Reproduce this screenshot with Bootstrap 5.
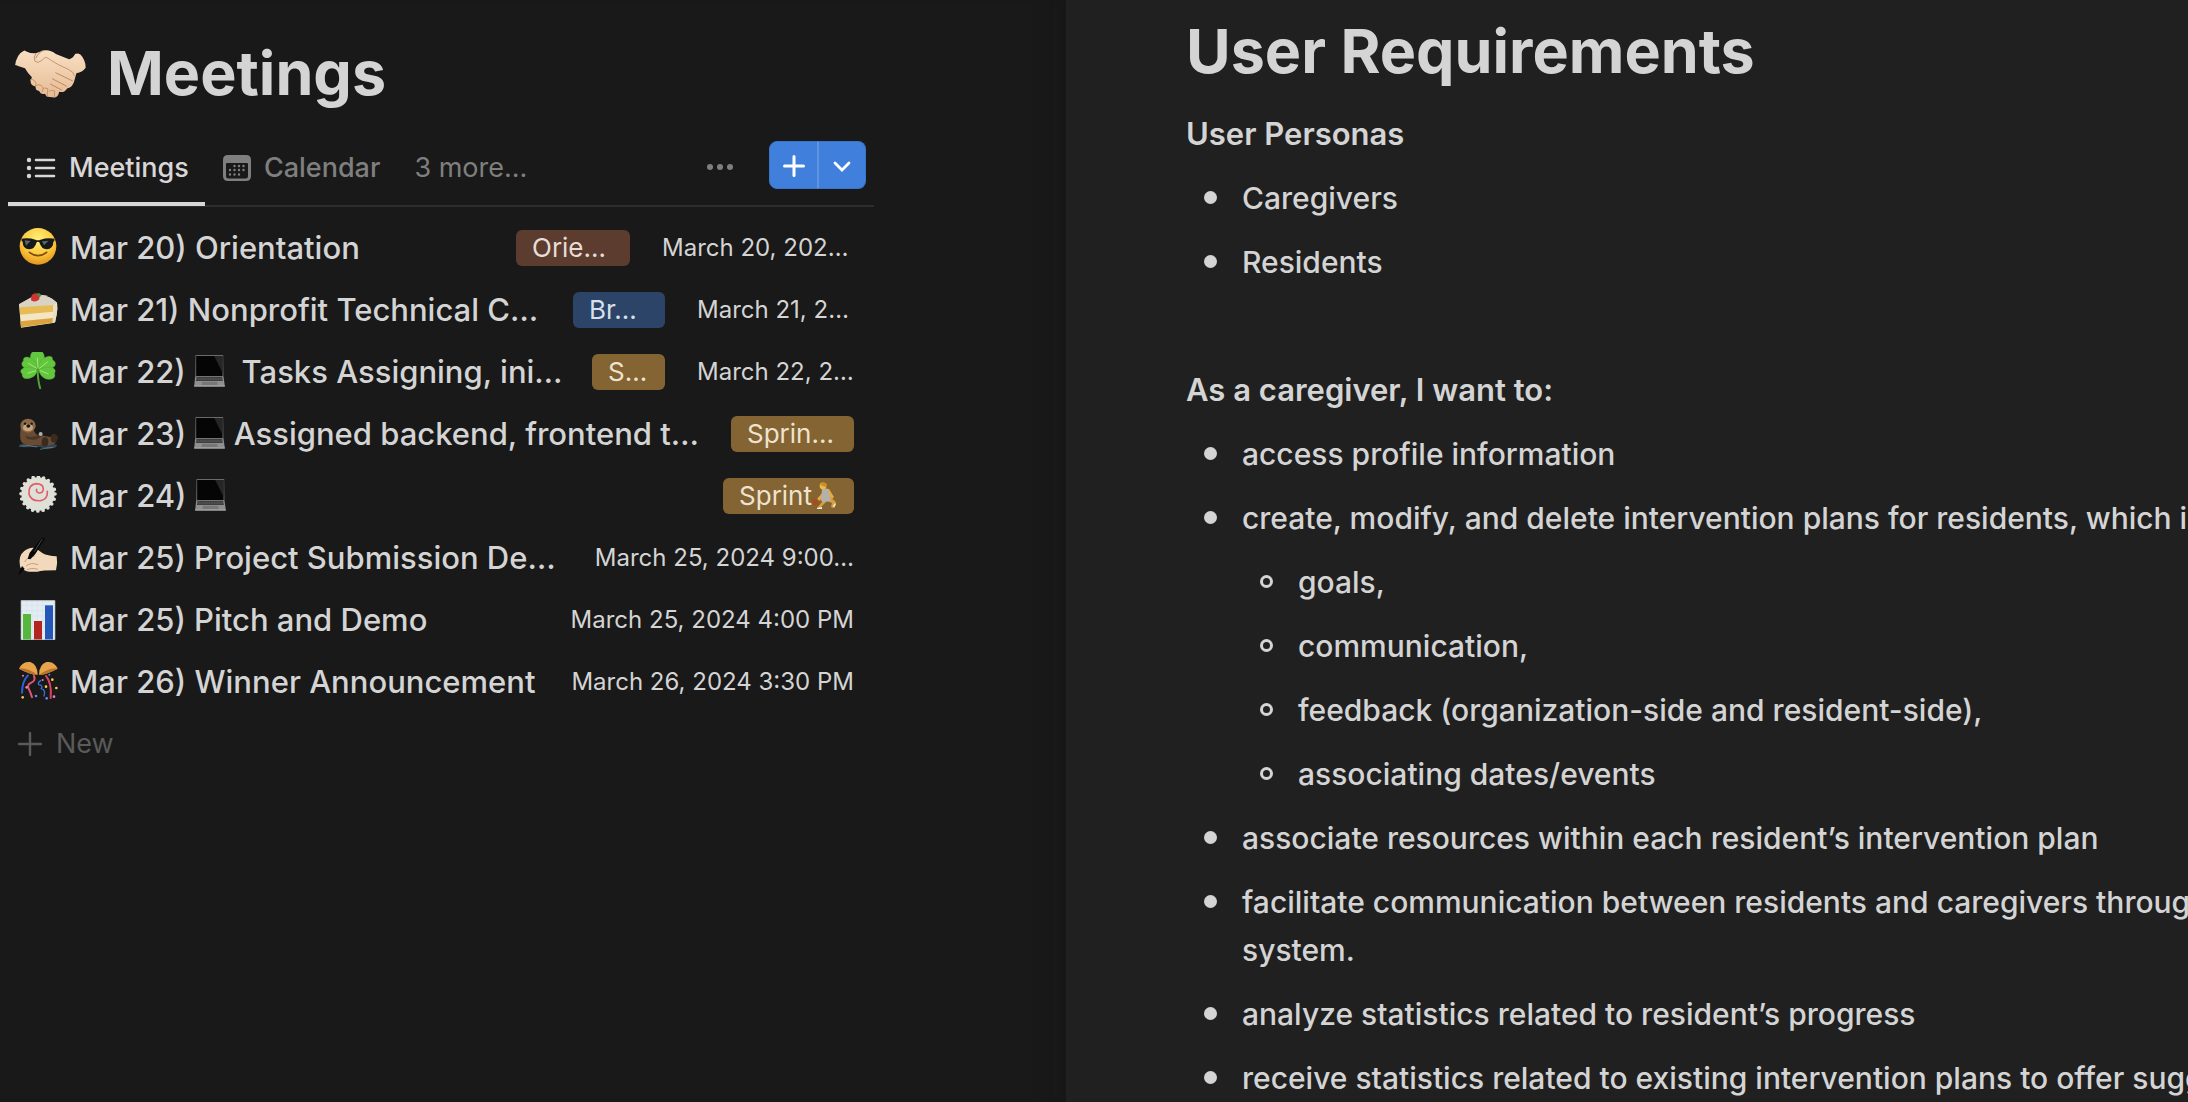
<!DOCTYPE html>
<html lang="en" data-bs-theme="dark">
<head>
<meta charset="utf-8">
<meta name="viewport" content="width=device-width, initial-scale=1">
<title>Meetings</title>
<link href="https://cdn.jsdelivr.net/npm/bootstrap@5.3.0/dist/css/bootstrap.min.css" rel="stylesheet">
<style>
  body { font-family: Inter, "Liberation Sans", sans-serif; color: #d4d4d4; background: #191919; }
  h1, h2 { color: #d4d4d4; }
  .pane-left { flex: 0 0 1066px; padding-left: 8px; background: #191919; box-shadow: inset -30px 0 20px -20px #171717; }
  .pane-right { flex: 1 1 0; min-width: 0; padding-left: 120px; background: #202020; }
  .board { width: 866px; }
  .page-title { font-size: 61px; line-height: 78px; font-weight: 700; margin: 0; color: #d4d4d4; }
  .pane-left .page-title { padding: 34px 0 0 6px; gap: 20px; margin-bottom: 13px; }
  .pane-right .page-title { padding-top: 12px; margin-bottom: 12px; }
  .view-bar { height: 82px; border-bottom: 2px solid #2d2d2d; padding-right: 8px; }
  .view-tab { height: 82px; padding: 10px 16px 0 18px; gap: 13px; font-size: 27px; color: #7f7f7f; border-bottom: 4px solid transparent; text-decoration: none; font-weight: 500; }
  .view-tab.active { color: #d9d6d8; border-bottom-color: #d9d6d8; }
  .view-tab.plain { font-weight: 400; }
  .more-btn { padding: 0; margin-right: 35px; line-height: 1; color: #7f7f7f; }
  .new-btn { height: 48px; background: #407fdb; border: 1px solid #3a75cb; color: #fff; padding: 0; --bs-btn-border-radius: 8px; width: 49px; }
  .new-btn:hover { background: #3a75cb; color: #fff; }
  .new-btn + .new-btn { border-left: 2px solid #6094df; }
  .rows { padding: 10px 20px 0 10px; }
  .meeting { height: 62px; gap: 32px; }
  .meeting-name { font-size: 31px; font-weight: 500; gap: 12px; color: #d4d4d4; text-decoration: none; white-space: pre; min-width: 0; }
  .meeting-name > svg { flex: none; }
  .meeting-name > span { min-width: 0; }
  .laptop { width: 31px; height: 32px; vertical-align: -4px; }
  .tag { height: 36px; line-height: 36px; border-radius: 6px; padding: 0 16px; font-size: 26px; white-space: nowrap; flex: none; color: #e6ddd6; }
  .tag-brown { background: #5b3c2f; width: 114px; }
  .tag-blue { background: #2c4468; width: 92px; color: #d9e0ea; }
  .tag-gold { background: #836432; color: #eee3cf; }
  .tag-s { width: 73px; }
  .tag-l { width: 123px; }
  .when { font-size: 24px; white-space: nowrap; flex: none; }
  .when-m { width: 192px; }
  .when-s { width: 157px; }
  .add-row { height: 62px; gap: 14px; font-size: 27px; color: #5a5a5a; padding: 0; border: 0; background: none; }
  .doc-line { font-size: 30px; line-height: 48px; padding: 8px 0; margin: 0; white-space: nowrap; font-weight: 500; }
  .doc-head { font-size: 31px; font-weight: 600; }
  .doc-blank { height: 64px; }
  .dot, .ring { flex: none; width: 13px; height: 13px; border-radius: 50%; margin: 17px 25px 0 18px; }
  .dot { background: #d4d4d4; }
  .ring { border: 3px solid #d4d4d4; }
  .nest { padding-left: 56px; }
</style>
<script src="https://cdn.jsdelivr.net/npm/bootstrap@5.3.0/dist/js/bootstrap.bundle.min.js"></script>
</head>
<body>
<svg width="0" height="0" class="d-none" aria-hidden="true">
  <symbol id="laptop" viewBox="0 0 92 96">
    <path d="M4 0h83l1 66H3z" fill="#6a6a6a"/><path d="M6 3h79v60H6z" fill="#050505"/><path d="M60 3h25v50z" fill="#262626"/>
    <path d="M3 65h85l4 27H0z" fill="#8f8f8f"/><path d="M7 66h77l2 12H5z" fill="#3d3d3d"/><path d="M7 70h78M6 74h79" stroke="#777" stroke-width="1.5" stroke-dasharray="3 2"/>
    <path d="M24 80h45l2 10H22z" fill="#777"/><path d="M0 91h92v4H0z" fill="#b4b4b4"/>
  </symbol>
</svg>
<div class="d-flex vh-100 overflow-hidden">
  <section class="pane-left overflow-hidden">
    <div class="board">
      <h1 class="page-title d-flex align-items-center">
        <svg width="73" height="51" viewBox="40 92 220 152" aria-hidden="true">
          <defs><linearGradient id="skin" x1="0" y1="0" x2="0" y2="1"><stop offset="0" stop-color="#f8dfc3"/><stop offset="1" stop-color="#e6bb93"/></linearGradient></defs>
          <path d="M43 146q4-36 28-47l10 4q8 5 25 4l22-8q20-4 38 10l40 16q12-3 18-16 8-4 16 2 16 16 16 40-10 14-28 16l-6 22q-4 20-22 24-8 14-24 10-2 16-14 17l-14-1q-12 0-14-10-14 3-18-8-12-2-11-14-16-3-15-18l4-10q-14-14-21-27-18-4-30-10z" fill="url(#skin)"/>
          <path d="M106 107q-8 12-3 24 10 8 20-2l12-10q8 2 18 10 20 14 50 26 18 8 19 20" fill="none" stroke="#c5946c" stroke-width="3"/>
          <path d="M166 166l50 24M156 184l42 22M150 200l34 18M128 99q-14 4-22 22" fill="none" stroke="#bd8860" stroke-width="3" stroke-linecap="round"/>
          <path d="M88 188q6-6 14 2t2 16M106 206q6-8 16-2t2 20M126 216q6-8 16-2l-2 24M146 222q8-6 16-2v20" fill="none" stroke="#c5946c" stroke-width="3"/>
        </svg>
        <span>Meetings</span>
      </h1>
      <nav class="view-bar d-flex align-items-center" aria-label="Views">
        <div class="d-flex align-items-start">
          <a href="#" class="view-tab active d-flex align-items-center">
            <svg width="30" height="22" viewBox="0 0 30 22" fill="none" stroke="currentColor" stroke-linecap="round"><path d="M10 3h18M10 11h18M10 19h18" stroke-width="2.6"/><path d="M3 3h0M3 11h0M3 19h0" stroke-width="4.4"/></svg>
            <span>Meetings</span></a>
          <a href="#" class="view-tab d-flex align-items-center">
            <svg width="28" height="26" viewBox="0 0 28 26"><path d="M5 0h18q5 0 5 5v16q0 5-5 5H5q-5 0-5-5V5q0-5 5-5zM3 9v12q0 2.500 2.500 2.500h17q2.500 0 2.500-2.500V9q0-1-1-1H4q-1 0-1 1z" fill="currentColor" fill-rule="evenodd"/><path d="M11.500 11h0M16 11h0M20.500 11h0M7 15h0M11.500 15h0M16 15h0M20.500 15h0M7 19.500h0M11.500 19.500h0M16 19.500h0" stroke="currentColor" stroke-width="2.400" stroke-linecap="round"/></svg>
            <span>Calendar</span></a>
          <a href="#" class="view-tab plain d-flex align-items-center">3 more...</a>
        </div>
        <button type="button" class="btn more-btn ms-auto" aria-label="More options"><svg width="26" height="8" viewBox="0 0 26 8" fill="currentColor"><circle cx="3" cy="4" r="3"/><circle cx="13" cy="4" r="3"/><circle cx="23" cy="4" r="3"/></svg></button>
        <div class="btn-group">
          <button type="button" class="btn new-btn" aria-label="New"><svg width="24" height="24" viewBox="0 0 24 24"><path d="M12 2.500v19M2.500 12h19" stroke="#fff" stroke-width="3" stroke-linecap="round"/></svg></button>
          <button type="button" class="btn new-btn" aria-label="New from template"><svg width="18" height="12" viewBox="0 0 18 12"><path d="M2 2l7 7 7-7" fill="none" stroke="#fff" stroke-width="2.800" stroke-linecap="round"/></svg></button>
        </div>
      </nav>

      <div class="rows">
        <div class="meeting d-flex align-items-center">
          <a href="#" class="meeting-name d-flex align-items-center me-auto"><svg width="40" height="40" viewBox="54 39 120 120">
            <defs><radialGradient id="sun" cx=".5" cy=".3" r=".75"><stop offset="0" stop-color="#fff07a"/><stop offset=".6" stop-color="#fbc638"/><stop offset="1" stop-color="#e08a1b"/></radialGradient></defs>
            <circle cx="114" cy="94" r="55" fill="url(#sun)"/><path d="M64 71q24-3 42 3 8 3 16 0 18-6 42-3l-1 7-3 2q0 22-20 23-16 0-22-21-4-4-8 0-6 21-22 21-20-1-20-23l-3-2z" fill="#16191c"/><path d="M74 76l18 2-14 14zM126 79l20-2-14 14z" fill="#5b6368"/><path d="M88 112q26 20 52 0" fill="none" stroke="#7c4a12" stroke-width="5" stroke-linecap="round"/></svg><span>Mar 20) Orientation</span></a>
          <span class="tag tag-brown">Orie…</span><time class="when when-m">March 20, 202…</time>
        </div>
        <div class="meeting d-flex align-items-center">
          <a href="#" class="meeting-name d-flex align-items-center me-auto"><svg width="40" height="40" viewBox="54 225 120 120">
            <path d="M57 268l54-30q40 4 60 25 4 28-7 60L63 338z" fill="#f3e6c4"/><path d="M57 268l54-30q40 4 60 25l-10 8-98 7z" fill="#d9d3c6"/><path d="M59 277l101-7v20L60 299z" fill="#e7bc56"/><path d="M61 319l99-10-2 14-95 14z" fill="#dba33f"/><path d="M160 271q12-6 12 12l-6 38-8 2z" fill="#e9ddc6"/><path d="M93 256q-2-20 14-21 14 4 11 18-12 12-25 3z" fill="#cf3530"/><path d="M108 236l10-2 6 8-6 5z" fill="#4f8a38"/></svg><span>Mar 21) Nonprofit Technical C…</span></a>
          <span class="tag tag-blue">Br…</span><time class="when when-s">March 21, 2…</time>
        </div>
        <div class="meeting d-flex align-items-center">
          <a href="#" class="meeting-name d-flex align-items-center me-auto"><svg width="40" height="40" viewBox="54 411 120 120">
            <g fill="#62c63e" stroke="#4aa52f" stroke-width="1"><path d="M115 464C90 446 86 424 96 412q8-10 18-2 10-6 17 6c6 14 0 34-16 48z"/><path d="M115 464c0-22 12-36 30-40q14-2 13 11 12 6 7 17c-10 14-30 16-50 12z"/><path d="M113 464c-2-20-12-34-30-38q-15-1-13 12-8 6-3 15c10 12 28 14 46 11z"/><path d="M113 464c-18-8-36-10-46-3q-10 8-1 15 0 16 16 15c18-2 28-12 31-27z"/><path d="M115 464c16-8 34-10 46-4q8 6 3 15 4 15-11 18c-18 2-32-8-38-29z"/></g><path d="M113 462q0 34 8 60" fill="none" stroke="#4fa332" stroke-width="6"/><path d="M114 458l-2-30M118 460l26-20M110 460l-26-16M108 467l-26 8M120 467l26 10" stroke="#a7e67b" stroke-width="3"/></svg><span>Mar 22) <svg class="laptop" role="img" aria-label="laptop"><use href="#laptop"/></svg>  Tasks Assigning, ini…</span></a>
          <span class="tag tag-gold tag-s">S…</span><time class="when when-s">March 22, 2…</time>
        </div>
        <div class="meeting d-flex align-items-center">
          <a href="#" class="meeting-name d-flex align-items-center me-auto"><svg width="40" height="40" viewBox="54 597 120 120">
            <path d="M56 690q14-6 30 0t40-2 46 2l-6 8-26 5-20-7-50 1z" fill="#33454f"/><path d="M62 640q-6 40 8 46 24 10 62 2l10 4 22-6q10-10 8-22-14-8-22 2l-42-8-8-14-16-18z" fill="#6a4b34"/><ellipse cx="84" cy="632" rx="23" ry="21" fill="#8b6848"/><ellipse cx="84" cy="638" rx="15" ry="11" fill="#c6a681"/><ellipse cx="85" cy="633" rx="6" ry="5" fill="#1b1410"/><circle cx="75" cy="626" r="3.500" fill="#1b1410"/><circle cx="95" cy="626" r="3.500" fill="#1b1410"/><path d="M76 662q24 10 44-6l8 6q-20 18-46 10z" fill="#4d3625"/><circle cx="122" cy="657" r="6" fill="#b0b0ae"/><ellipse cx="135" cy="681" rx="10" ry="14" fill="#3b2a1e"/><ellipse cx="162" cy="670" rx="10" ry="13" fill="#3b2a1e"/><path d="M58 694q30-6 54 2M120 703q20-5 40-6" fill="none" stroke="#6f93a6" stroke-width="2"/></svg><span>Mar 23) <svg class="laptop" role="img" aria-label="laptop"><use href="#laptop"/></svg> Assigned backend, frontend t…</span></a>
          <span class="tag tag-gold tag-l">Sprin…</span>
        </div>
        <div class="meeting d-flex align-items-center">
          <a href="#" class="meeting-name d-flex align-items-center me-auto"><svg width="40" height="40" viewBox="54 48 120 120">
            <circle cx="114" cy="102" r="50" fill="#dfe1d8"/><circle cx="114" cy="102" r="51" fill="none" stroke="#dfe1d8" stroke-width="11" stroke-linecap="round" stroke-dasharray="0 16"/><path d="M142 94q2 24-20 28-30 2-35-20-3-28 22-31 20 0 21 16-1 13-13 12-10-3-7-11" fill="none" stroke="#e05f68" stroke-width="5" stroke-linecap="round"/></svg><span>Mar 24) <svg class="laptop" role="img" aria-label="laptop"><use href="#laptop"/></svg></span></a>
          <span class="tag tag-gold d-flex align-items-center">Sprint<svg width="26" height="28" viewBox="0 0 26 28" role="img" aria-label="basketball player"><path d="M10 6l7 1 5 8-2 2-5-5-8 7-2-2 6-7z" fill="#e5ac3e"/><path d="M9 15l8-1 7 6-3 6-2-1 1-4-5-2-4 4-4 4-2-1 5-6z" fill="#d9a03a"/><path d="M10 7l6 0 2 8 1 4-9 1-1-2z" fill="#b3b0ad"/><circle cx="11" cy="4" r="3.400" fill="#f0b93f"/><path d="M8 3q2-4 7-1l-1 3z" fill="#c98d2c"/><circle cx="3.500" cy="20" r="3.200" fill="#a84d1f"/><path d="M5 26l5-1v2H5zM21 24l2-3 1 1-2 4z" fill="#eee"/></svg></span>
        </div>
        <div class="meeting d-flex align-items-center">
          <a href="#" class="meeting-name d-flex align-items-center me-auto"><svg width="40" height="40" viewBox="54 234 120 120">
            <path d="M60 318q-6-30 12-44 16-14 34-10l22 16q14 8 42 9 4 22-2 42-40 0-56 4-30 2-38-4-12-2-14-13z" fill="#f3d9bc"/><path d="M78 318q14-12 36-4M80 330q14-8 34-2M74 306q8-16 30-18" fill="none" stroke="#c99d78" stroke-width="3"/><path d="M128 231l7 5-29 46-15 16-8-2 6-18zM66 318l8 8-14 16-6 4z" fill="#070707"/><path d="M127 237l-24 38" stroke="#6a6a6a" stroke-width="2"/></svg><span>Mar 25) Project Submission De…</span></a>
          <time class="when">March 25, 2024 9:00…</time>
        </div>
        <div class="meeting d-flex align-items-center">
          <a href="#" class="meeting-name d-flex align-items-center me-auto"><svg width="40" height="40" viewBox="54 414 120 120">
            <path d="M63 415h102v119H63z" fill="#e3ebf3"/><path d="M64 430h100M64 446h100M64 462h100M64 478h100M64 494h100M64 510h100M80 416v117M96 416v117M112 416v117M128 416v117" stroke="#cdd8e4" stroke-width="1"/><path d="M69 456h24v77H69z" fill="#55b83c"/><path d="M102 477h24v56h-24z" fill="#b3261f"/><path d="M135 430h24v103h-24z" fill="#2458b8"/><path d="M63 416h102v117H63z" fill="none" stroke="#a9b2bb" stroke-width="2"/></svg><span>Mar 25) Pitch and Demo</span></a>
          <time class="when">March 25, 2024 4:00 PM</time>
        </div>
        <div class="meeting d-flex align-items-center">
          <a href="#" class="meeting-name d-flex align-items-center me-auto"><svg width="40" height="40" viewBox="54 602 120 120">
            <path d="M57 622q10-22 34-20 22 8 22 38-18 2-56-18z" fill="#e8a44a"/><path d="M173 622q-10-22-34-20-22 8-22 38 18 2 56-18z" fill="#e8a44a"/><path d="M57 622q18-6 56 18-18 2-56-18zM173 622q-18-6-56 18 18 2 56-18z" fill="#b9762a"/><g fill="none" stroke-width="6" stroke-linecap="round"><path d="M84 642q-18 18-18 52" stroke="#2f62d9"/><path d="M102 644q6 14-8 20t-8 18 10 26" stroke="#e25675"/><path d="M138 644q18 20 14 66" stroke="#d9415f"/><path d="M122 658q-10 6-6 12 14 2 8 12 14 4 8 22" stroke="#3d6fd8" stroke-width="4"/></g><g fill="#f5c94b"><circle cx="68" cy="708" r="4"/><circle cx="138" cy="676" r="4"/><circle cx="169" cy="680" r="4"/><circle cx="157" cy="655" r="4"/></g><g fill="#e884b5"><circle cx="162" cy="706" r="4"/><circle cx="80" cy="678" r="4"/><circle cx="128" cy="656" r="3"/><circle cx="69" cy="643" r="3"/></g><g fill="#5b8def"><circle cx="108" cy="704" r="4"/><circle cx="140" cy="711" r="4"/><circle cx="148" cy="640" r="3"/></g></svg><span>Mar 26) Winner Announcement</span></a>
          <time class="when">March 26, 2024 3:30 PM</time>
        </div>
        <button type="button" class="add-row d-flex align-items-center"><svg width="24" height="24" viewBox="0 0 24 24"><path d="M12 1v22M1 12h22" stroke="currentColor" stroke-width="2.400" stroke-linecap="round"/></svg>New</button>
      </div>
    </div>
  </section>

  <main class="pane-right overflow-hidden">
    <h1 class="page-title text-nowrap">User Requirements</h1>
    <h2 class="doc-line doc-head">User Personas</h2>
    <ul class="list-unstyled mb-0">
      <li class="doc-line d-flex"><span class="dot"></span>Caregivers</li>
      <li class="doc-line d-flex"><span class="dot"></span>Residents</li>
    </ul>
    <div class="doc-blank"></div>
    <h2 class="doc-line doc-head">As a caregiver, I want to:</h2>
    <ul class="list-unstyled mb-0">
      <li class="doc-line d-flex"><span class="dot"></span>access profile information</li>
      <li>
        <div class="doc-line d-flex"><span class="dot"></span>create, modify, and delete intervention plans for residents, which includes</div>
        <ul class="list-unstyled nest">
          <li class="doc-line d-flex"><span class="ring"></span>goals,</li>
          <li class="doc-line d-flex"><span class="ring"></span>communication,</li>
          <li class="doc-line d-flex"><span class="ring"></span>feedback (organization-side and resident-side),</li>
          <li class="doc-line d-flex"><span class="ring"></span>associating dates/events</li>
        </ul>
      </li>
      <li class="doc-line d-flex"><span class="dot"></span>associate resources within each resident’s intervention plan</li>
      <li class="doc-line d-flex"><span class="dot"></span><span>facilitate communication between residents and caregivers through<br>system.</span></li>
      <li class="doc-line d-flex"><span class="dot"></span>analyze statistics related to resident’s progress</li>
      <li class="doc-line d-flex"><span class="dot"></span>receive statistics related to existing intervention plans to offer suggestions</li>
    </ul>
  </main>
</div>
</body>
</html>
